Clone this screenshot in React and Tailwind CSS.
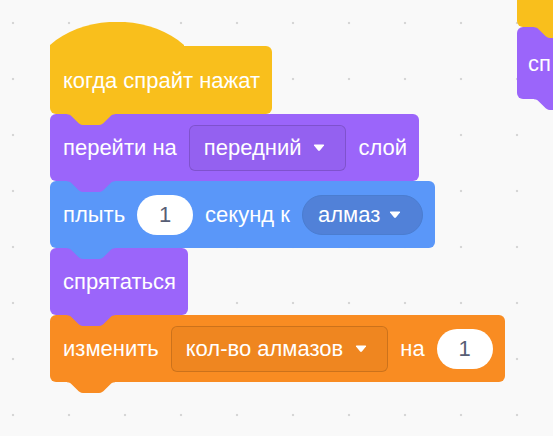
import React from "react";

const font = { fontFamily: '"Liberation Sans", Arial, sans-serif' };

const Notch = ({ color }) => (
  <svg
    className="absolute left-[17px] top-full z-10 -translate-y-px"
    width="48"
    height="12"
    viewBox="0 -1 36 9"
    preserveAspectRatio="none"
  >
    <path
      d="M0,-1 H36 V0 c-2,0 -3,1 -4,2 l-4,4 c-1,1 -2,2 -4,2 h-12 c-2,0 -3,-1 -4,-2 l-4,-4 c-1,-1 -2,-2 -4,-2 Z"
      fill={color}
    />
  </svg>
);

const Arrow = () => (
  <svg width="12" height="8" viewBox="0 0 12 8" className="shrink-0">
    <path
      d="M1,1.6 Q0.4,0.5 1.8,0.5 H10.2 Q11.6,0.5 11,1.6 L6.9,6.6 Q6,7.5 5.1,6.6 Z"
      fill="#fff"
    />
  </svg>
);

const Block = ({ className, tab, children }) => (
  <div
    className={`relative flex h-[67px] items-center gap-3 rounded-[6px] pl-[13px] pr-3 text-[22px] text-white ${className}`}
  >
    {children}
    {tab && <Notch color={tab} />}
  </div>
);

const Field = ({ label, className }) => (
  <div
    className={`flex h-[46px] items-center gap-3 rounded-[6px] border pl-[14px] pr-[20px] ${className}`}
  >
    <span>{label}</span>
    <Arrow />
  </div>
);

const NumInput = ({ value }) => (
  <div className="flex h-[40px] w-[56px] items-center justify-center rounded-full bg-white text-[22px] text-[#575e75]">
    {value}
  </div>
);

export default function App() {
  return (
    <div
      className="relative h-[436px] w-[553px] overflow-hidden bg-[#f9f9f9] bg-[radial-gradient(circle,#d6d6d6_1.1px,transparent_1.6px)] bg-[length:56px_56px] bg-[position:-15px_-5px]"
      style={font}
    >
      {/* script in the corner, mostly off screen */}
      <div className="absolute left-[517px] top-[-40px] flex flex-col">
        <Block className="h-[60px] w-[120px] bg-[#f9bf1c]" tab="#f9bf1c" />
        <Block className="h-[72px] w-[120px] bg-[#9b65fa]" tab="#9b65fa">
          <span className="-ml-[2px]">сп</span>
        </Block>
      </div>

      {/* main script */}
      <div className="absolute left-[50px] top-[22px] flex flex-col items-start">
        <div className="relative flex flex-col items-start">
          <svg width="134" height="24" viewBox="0 0 134 24" className="block">
            <path d="M0,25 L0,23 C35,-8 99,-8 134,23 L134,25 Z" fill="#f9bf1c" />
          </svg>
          <Block className="h-[68px] rounded-tl-none bg-[#f9bf1c]" tab="#f9bf1c">
            <span>когда спрайт нажат</span>
          </Block>
        </div>

        <Block className="bg-[#9b65fa]" tab="#9b65fa">
          <span>перейти на</span>
          <Field label="передний" className="border-black/15 bg-black/[0.04]" />
          <span>слой</span>
        </Block>

        <Block className="bg-[#5a97f9]" tab="#5a97f9">
          <span>плыть</span>
          <NumInput value="1" />
          <span>секунд к</span>
          <div className="flex h-[40px] items-center gap-[9px] rounded-full border border-[#4b7dd0] bg-[#5181d8] pl-[15px] pr-[21px]">
            <span>алмаз</span>
            <Arrow />
          </div>
        </Block>

        <Block className="bg-[#9b65fa]" tab="#9b65fa">
          <span>спрятаться</span>
        </Block>

        <Block className="bg-[#f98c22]" tab="#f98c22">
          <span>изменить</span>
          <Field label="кол-во алмазов" className="border-black/15 bg-black/[0.04]" />
          <span>на</span>
          <NumInput value="1" />
        </Block>
      </div>
    </div>
  );
}
